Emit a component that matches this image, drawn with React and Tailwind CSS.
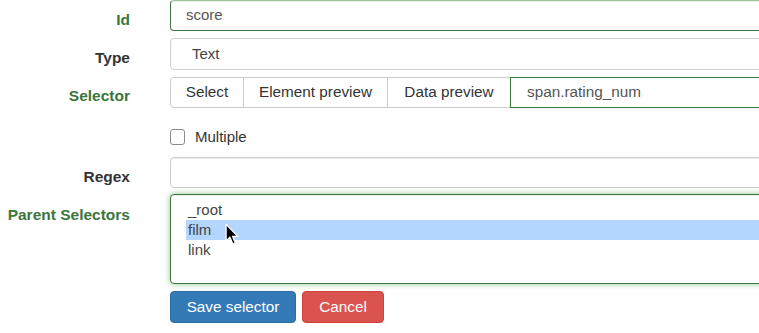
import React from 'react';

const font = { fontFamily: '"Liberation Sans", Arial, sans-serif' };

function Row({ label, green, children, className = '', labelPad = 'pt-[10px]' }) {
    return (
        <div className={`flex ${className}`}>
            <div
                className={`w-[130px] shrink-0 whitespace-nowrap text-right text-[15.5px] font-bold leading-[20px] ${labelPad} ${
                    green ? 'text-[#3c763d]' : 'text-[#333]'
                }`}
            >
                {label}
            </div>
            <div className="ml-[40px] w-[640px] shrink-0">{children}</div>
        </div>
    );
}

function Cursor() {
    return (
        <svg
            viewBox="0 0 13 21"
            className="pointer-events-none absolute left-[225px] top-[223px] h-[23px] w-[14px]"
        >
            <path
                d="M1 1 L1 16.5 L4.6 13 L7.3 19.3 L9.6 18.3 L7 12.2 L11.8 12.2 Z"
                fill="#000"
                stroke="#fff"
                strokeWidth="1.2"
                strokeLinejoin="round"
            />
        </svg>
    );
}

export default function App() {
    const options = ['_root', 'film', 'link'];

    return (
        <div className="relative h-[333px] w-[759px] overflow-hidden bg-white" style={font}>
            {/* Id */}
            <Row label="Id" green className="h-[31px]">
                <div className="flex h-[31px] items-center rounded border border-[#3c763d] border-t-[#9cc79c] bg-white pl-[15px] text-[15px] text-[#555] shadow-[inset_0_1px_1px_rgba(0,0,0,0.075)]">
                    score
                </div>
            </Row>

            {/* Type */}
            <Row label="Type" className="mt-[7px] h-[32px]">
                <div className="flex h-[32px] items-center rounded border border-[#d0d0d0] bg-white pl-[21px] text-[15px] text-[#444]">
                    Text
                </div>
            </Row>

            {/* Selector */}
            <Row label="Selector" green className="mt-[7px] h-[31px]" labelPad="pt-[9px]">
                <div className="flex h-[31px] text-[15.3px] text-[#333]">
                    <button className="w-[74px] rounded-l border border-[#ccc] bg-white">Select</button>
                    <button className="-ml-px w-[145px] border border-[#ccc] bg-white">Element preview</button>
                    <button className="-ml-px w-[124px] border border-[#ccc] bg-white">Data preview</button>
                    <div className="-ml-px flex flex-1 items-center border border-[#3c763d] bg-white pl-[16px] text-[#555]">
                        span.rating_num
                    </div>
                </div>
            </Row>

            {/* Multiple */}
            <Row label="" className="mt-[21px] h-[16px]" labelPad="pt-0">
                <label className="flex h-[16px] items-center text-[15px] text-[#333]">
                    <span className="h-[16px] w-[15px] rounded-[3px] border border-[#8a8a8a] bg-white" />
                    <span className="ml-[10px] leading-[16px]">Multiple</span>
                </label>
            </Row>

            {/* Regex */}
            <Row label="Regex" className="mt-[12px] h-[31px]">
                <div className="h-[31px] rounded border border-[#ccc] bg-white shadow-[inset_0_1px_1px_rgba(0,0,0,0.075)]" />
            </Row>

            {/* Parent Selectors */}
            <Row label="Parent Selectors" green className="mt-[6px] h-[90px]" labelPad="pt-[11px]">
                <div className="h-[90px] rounded border border-[#3c763d] bg-white pl-[15px] pt-[5px] text-[15px] leading-[20px] text-[#444] shadow-[inset_0_1px_1px_rgba(0,0,0,0.075),0_0_6px_#8fc98f]">
                    {options.map((o) => (
                        <div key={o} className={`pl-[2px] ${o === 'film' ? 'bg-[#b3d6fe]' : ''}`}>
                            {o}
                        </div>
                    ))}
                </div>
            </Row>

            {/* Actions */}
            <Row label="" className="mt-[7px] h-[32px]" labelPad="pt-0">
                <div className="flex gap-[6px] text-[15.3px] text-white">
                    <button className="h-[32px] w-[126px] rounded border border-[#2e6da4] bg-[#337ab7]">
                        Save selector
                    </button>
                    <button className="h-[32px] w-[82px] rounded border border-[#d43f3a] bg-[#d9534f]">
                        Cancel
                    </button>
                </div>
            </Row>

            <Cursor />
        </div>
    );
}
